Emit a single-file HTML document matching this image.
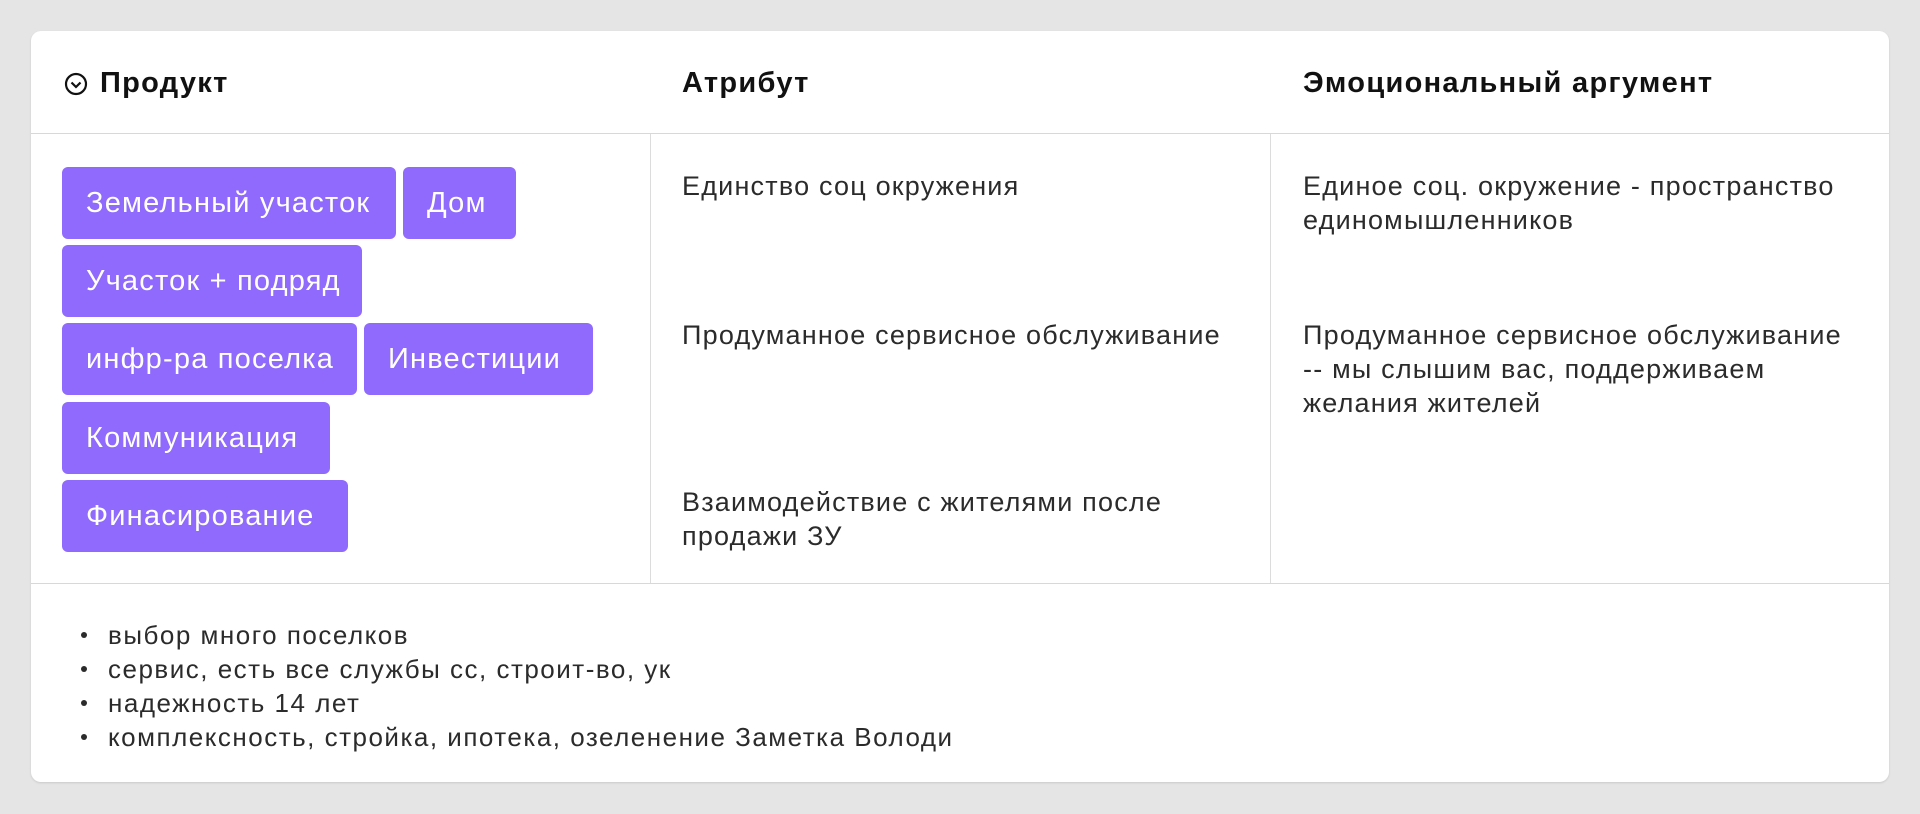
<!DOCTYPE html>
<html><head><meta charset="utf-8"><style>
body{margin:0;width:1920px;height:814px;background:#e5e5e5;font-family:"Liberation Sans",sans-serif;position:relative;overflow:hidden}
.card{position:absolute;left:31px;top:31px;width:1858px;height:751px;background:#fff;border-radius:10px;box-shadow:0 1px 2px rgba(0,0,0,.12)}
.a{position:absolute;white-space:nowrap}
.h{font-size:29px;font-weight:bold;color:#111;top:67px;letter-spacing:1.3px}
.hl{position:absolute;left:31px;width:1858px;height:1px;background:#d8d8d8}
.vl{position:absolute;top:134px;height:449px;width:1px;background:#dcdcdc}
.tag{position:absolute;left:62px;height:72px;background:#8f6afc;border-radius:6px;color:#fff;font-size:29px;line-height:72px;padding-left:24px;box-sizing:border-box;white-space:nowrap;letter-spacing:1.2px}
.t{position:absolute;font-size:27px;color:#2b2b2b;line-height:34px;white-space:nowrap;letter-spacing:1.2px}
.li{position:absolute;left:108px;font-size:26px;color:#2b2b2b;white-space:nowrap;letter-spacing:1.5px}
.li:before{content:"";position:absolute;left:-27px;top:12px;width:6px;height:6px;border-radius:50%;background:#2b2b2b}
</style></head><body>
<div class="card"></div>
<svg class="a" style="left:64px;top:72px" width="24" height="24" viewBox="0 0 24 24"><circle cx="12" cy="12" r="10" fill="none" stroke="#111" stroke-width="2.2"/><path d="M7.5 10.5l4.5 4.5 4.5-4.5" fill="none" stroke="#111" stroke-width="2.2"/></svg>
<div class="a h" style="left:100px">Продукт</div>
<div class="a h" style="left:682px">Атрибут</div>
<div class="a h" style="left:1303px">Эмоциональный аргумент</div>
<div class="hl" style="top:133px"></div>
<div class="hl" style="top:583px"></div>
<div class="vl" style="left:650px"></div>
<div class="vl" style="left:1270px"></div>
<div class="tag" style="top:167px;width:334px">Земельный участок</div>
<div class="tag" style="top:167px;left:403px;width:113px">Дом</div>
<div class="tag" style="top:245px;width:300px">Участок + подряд</div>
<div class="tag" style="top:323px;width:295px">инфр-ра поселка</div>
<div class="tag" style="top:323px;left:364px;width:229px">Инвестиции</div>
<div class="tag" style="top:402px;width:268px">Коммуникация</div>
<div class="tag" style="top:480px;width:286px">Финасирование</div>
<div class="t" style="left:682px;top:169px">Единство соц окружения</div>
<div class="t" style="left:682px;top:318px">Продуманное сервисное обслуживание</div>
<div class="t" style="left:682px;top:485px">Взаимодействие с жителями после<br>продажи ЗУ</div>
<div class="t" style="left:1303px;top:169px">Единое соц. окружение - пространство<br>единомышленников</div>
<div class="t" style="left:1303px;top:318px">Продуманное сервисное обслуживание<br>-- мы слышим вас, поддерживаем<br>желания жителей</div>
<div class="li" style="top:620px">выбор много поселков</div>
<div class="li" style="top:654px">сервис, есть все службы сс, строит-во, ук</div>
<div class="li" style="top:688px">надежность 14 лет</div>
<div class="li" style="top:722px">комплексность, стройка, ипотека, озеленение Заметка Володи</div>
</body></html>
